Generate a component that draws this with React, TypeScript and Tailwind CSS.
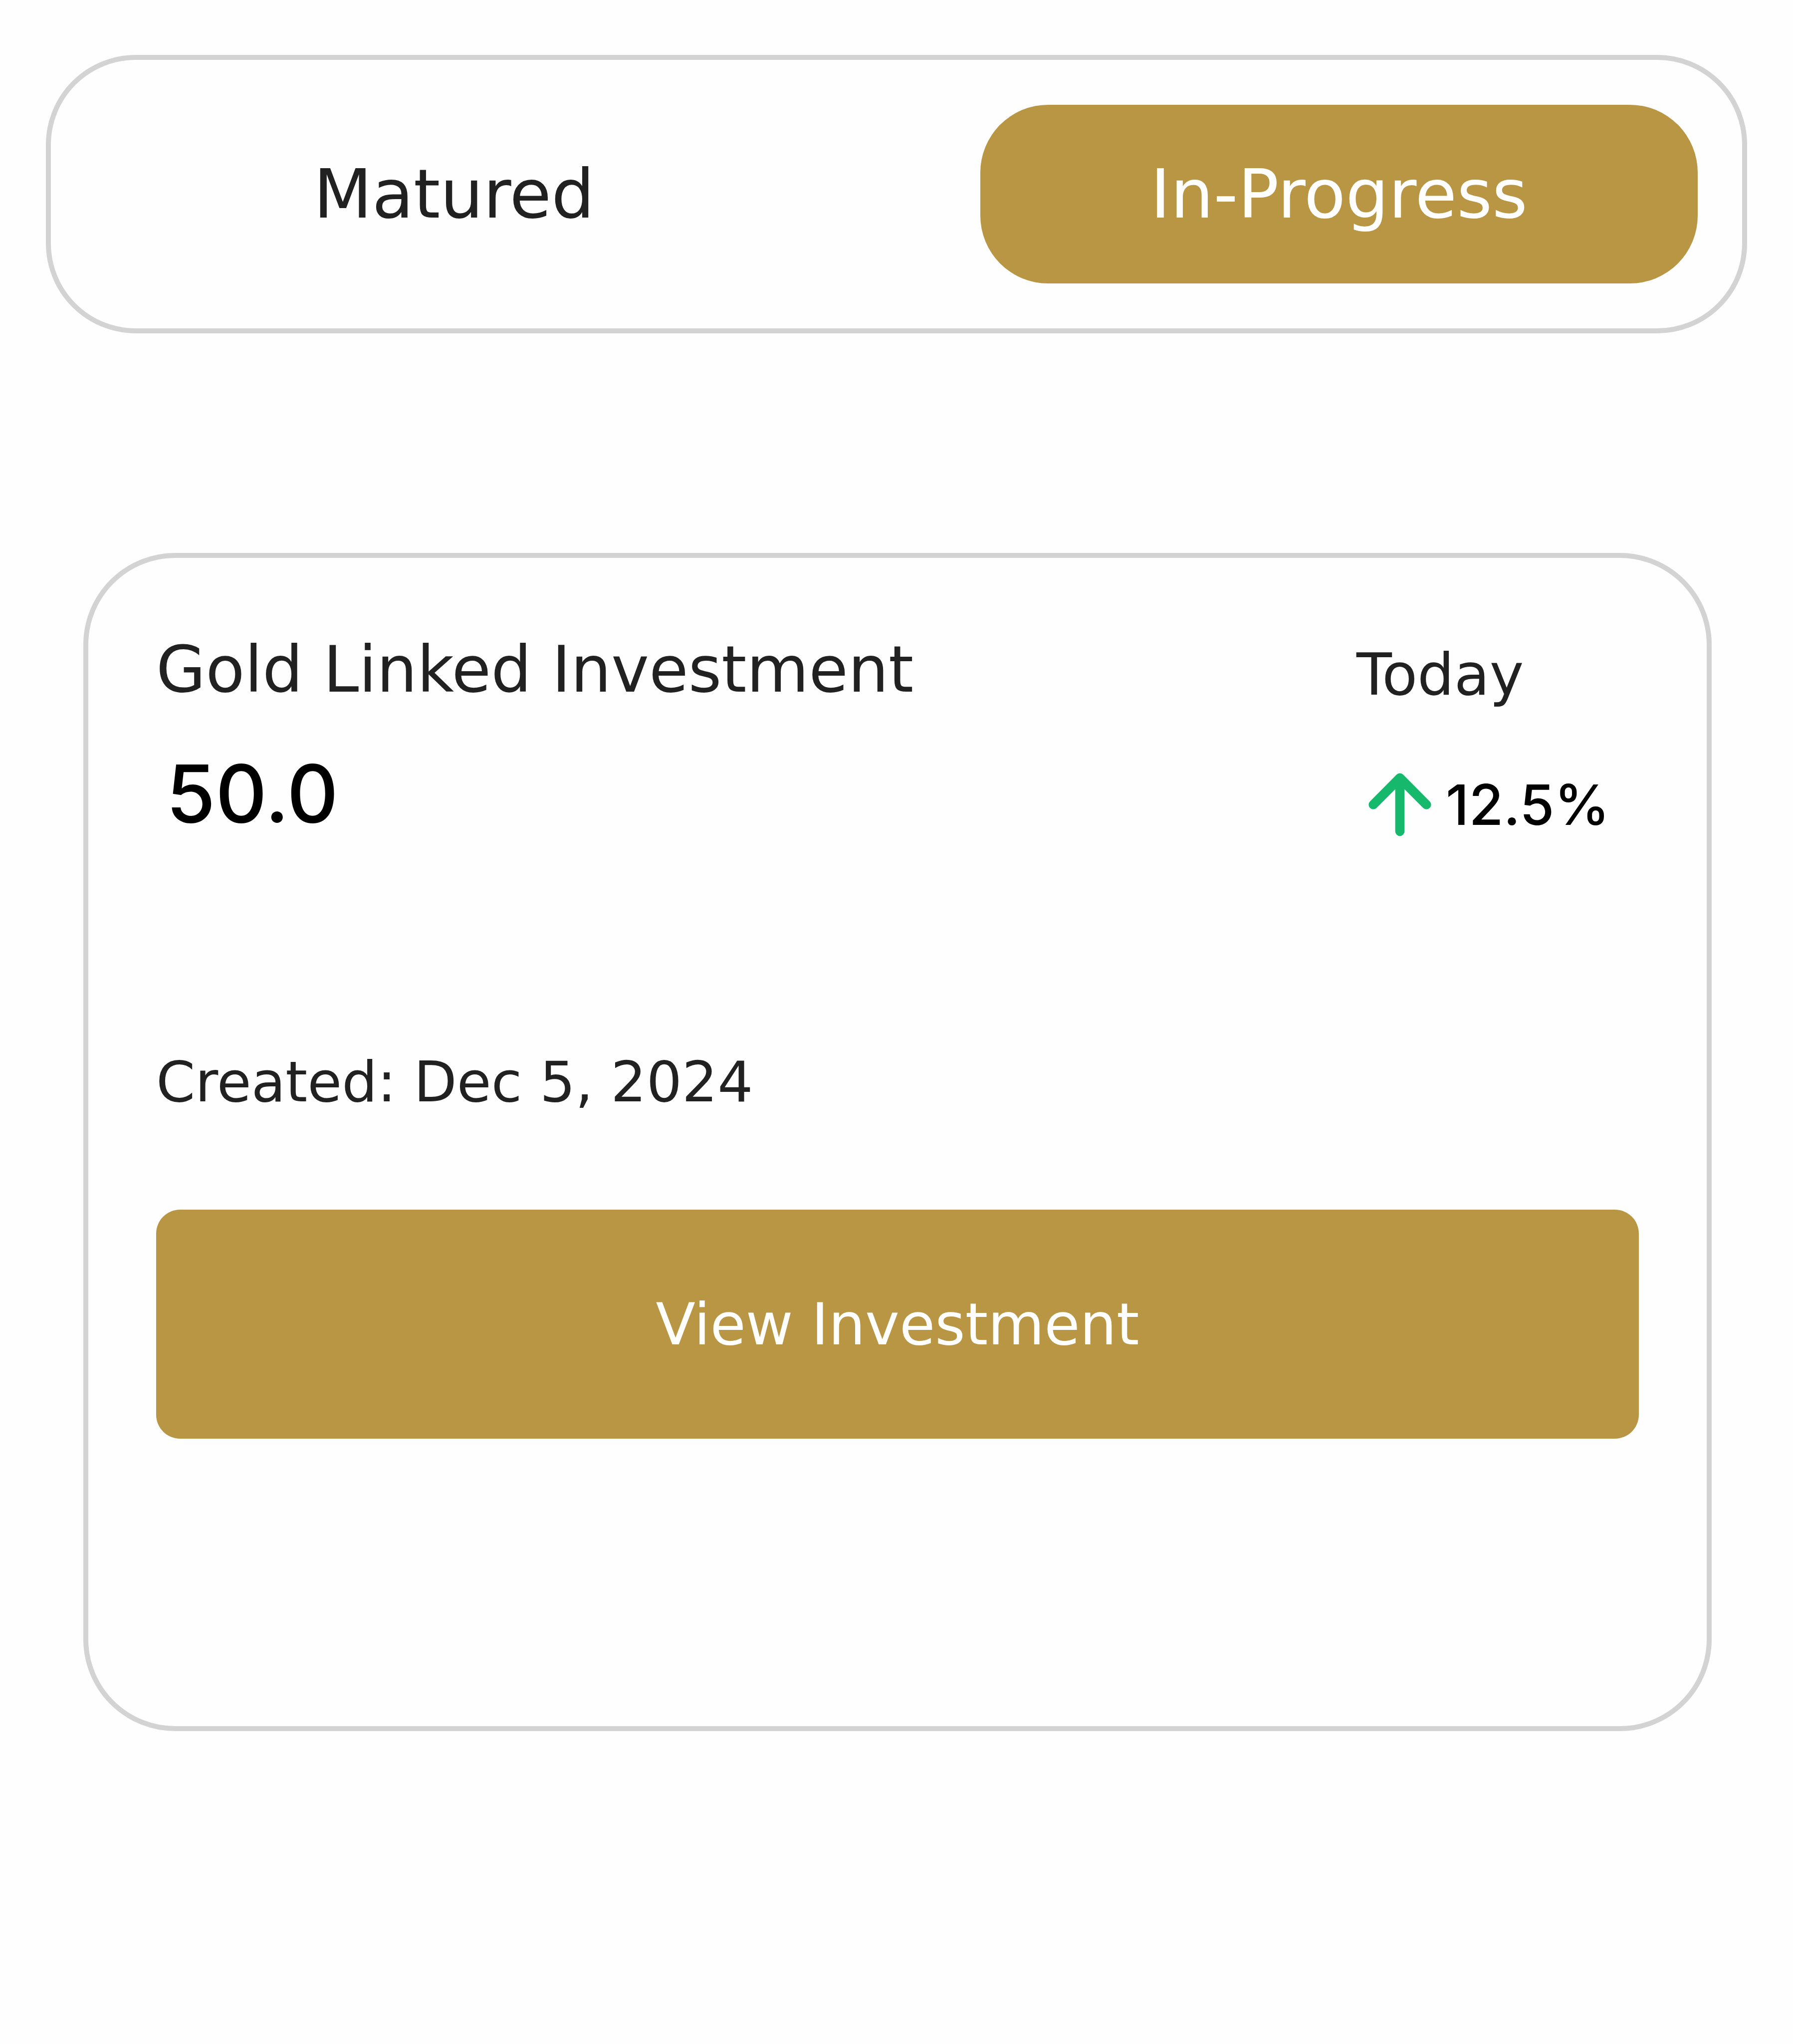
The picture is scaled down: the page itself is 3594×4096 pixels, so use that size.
import React, { useState } from 'react';

const TABS = ['Matured', 'In-Progress'];

const ArrowUp: React.FC = () => (
  <svg
    viewBox="137 120 466 460"
    className="h-[127px] w-[128px] shrink-0"
    fill="none"
    stroke="#16b86c"
    strokeWidth="68"
    strokeLinecap="round"
    strokeLinejoin="round"
    aria-hidden="true"
  >
    <path d="M370 544V155M176 350L370 155L564 350" />
  </svg>
);

const App: React.FC = () => {
  const [activeTab, setActiveTab] = useState('In-Progress');

  return (
    <main className="min-h-screen bg-[#fefefe] px-[92px] py-[110px] font-['DejaVu_Sans',sans-serif] text-[#212121]">
      <nav className="grid grid-cols-2 gap-[336px] rounded-[180px] border-[10px] border-[#d3d3d3] px-[89px] py-[90px]">
        {TABS.map((tab) => (
          <button
            key={tab}
            type="button"
            onClick={() => setActiveTab(tab)}
            className={
              activeTab === tab
                ? 'h-[358px] rounded-[136px] bg-[#b99644] text-[136px] leading-none text-white'
                : 'h-[358px] rounded-[136px] text-[136px] leading-none'
            }
          >
            {tab}
          </button>
        ))}
      </nav>

      <section className="mr-[71px] ml-[75px] mt-[440px] rounded-[184px] border-[10px] border-[#d3d3d3] px-[136px] pt-[144px] pb-[576px]">
        <div className="flex items-start justify-between">
          <div>
            <h2 className="text-[128px] leading-[160px]">Gold Linked Investment</h2>
            <p className="mt-[72px] pl-[20px] font-['Inter',sans-serif] text-[160px] leading-[192px] font-medium text-black">
              50.0
            </p>
          </div>

          <div className="w-[566px] pt-[10px]">
            <p className="text-[116px] leading-[160px]">Today</p>
            <div className="mt-[100px] flex h-[160px] items-center gap-[28px] pl-[23px]">
              <ArrowUp />
              <span className="font-['Inter',sans-serif] text-[112px] leading-[160px] font-medium text-black">
                12.5%
              </span>
            </div>
          </div>
        </div>

        <p className="mt-[396px] text-[112px] leading-[160px]">Created: Dec 5, 2024</p>

        <button
          type="button"
          className="mt-[176px] h-[459px] w-full rounded-[48px] bg-[#b99644] text-[116px] leading-none text-white"
        >
          View Investment
        </button>
      </section>
    </main>
  );
};

export default App;
